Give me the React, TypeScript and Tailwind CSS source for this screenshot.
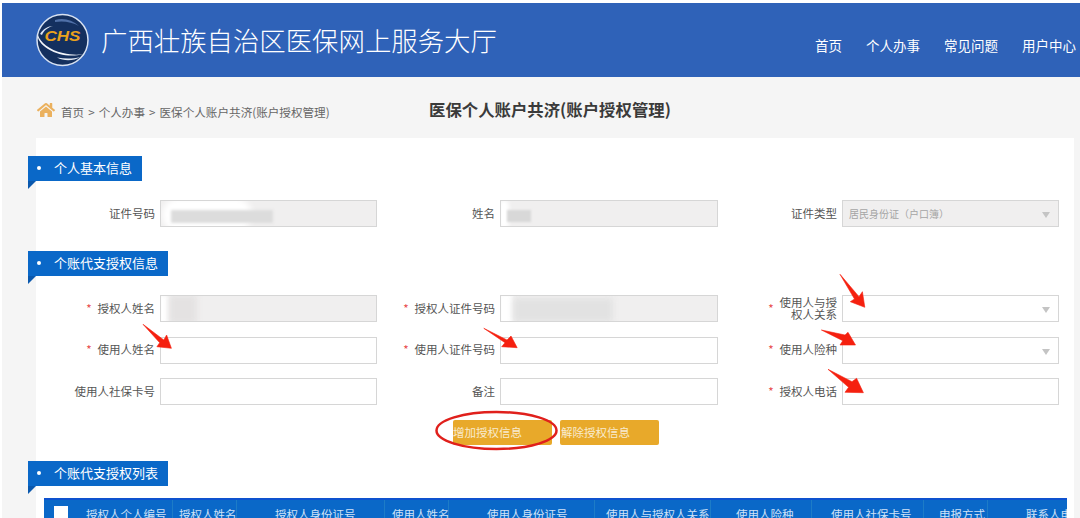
import { ReactNode } from 'react';
import { FaHome } from 'react-icons/fa';

function Logo() {
  return (
    <svg width="54" height="56" viewBox="0 0 54 56" className="shrink-0">
      <circle cx="27.5" cy="28" r="25.5" fill="#14305f" stroke="#d8e2f2" strokeWidth="1.5" />
      <path d="M3 23 C5 30 14 38 28 41 C35 42.5 42 43.5 48 42 C38 45 24 44 13 37 C6 32.5 2 27 3 23 Z" fill="#f2f5fa" />
      <path d="M22 45.5 C30 47 38 47 45 45 C39 49 29 49.5 22 45.5 Z" fill="#e3eaf4" />
      <path d="M5 22 C8 17 13 14 18 14 C13 15.5 9 18 7 23 Z" fill="#dfe7f3" />
      <path d="M20 8 C28 5.5 37 7.5 44 14 C37 10 28 8.5 20 10 Z" fill="#4f70a8" />
      <text x="27.5" y="28.5" textAnchor="middle" textLength="36" lengthAdjust="spacingAndGlyphs" fill="#eba21c" fontSize="14" fontWeight="700" fontStyle="italic" fontFamily="Liberation Sans, sans-serif">CHS</text>
    </svg>
  );
}

function SectionTab({ title, width, className }: { title: string; width: string; className: string }) {
  return (
    <div className={`relative -ml-2 flex h-[25px] items-center bg-[#0a68c8] pb-[1px] text-[13px] text-white ${width} ${className}`}>
      <span className="ml-[9px] mr-[13px] h-[4px] w-[4px] rounded-full bg-white" />
      {title}
      <span className="absolute left-0 top-[25px] h-0 w-0 border-r-[8px] border-t-[8px] border-r-transparent border-t-[#0a58ad]" />
    </div>
  );
}

function Field({ label, required, disabled, select, wide, children }: { label: ReactNode; required?: boolean; disabled?: boolean; select?: boolean; wide?: boolean; children?: ReactNode }) {
  return (
    <div className="flex h-[27px] items-center justify-end">
      <div className="mr-[5px] flex flex-1 items-center justify-end pb-[2px] text-right text-[11.5px] leading-[12px] text-[#555]">
        {required && <span className="mr-[6px] text-[#e8484a]">*</span>}
        <span>{label}</span>
      </div>
      <div className={`relative h-[27px] overflow-hidden border border-[#d6d6d6] ${wide ? 'w-[218px]' : 'w-[217px]'} ${disabled ? 'bg-[#f0efef]' : 'bg-white'}`}>
        {children}
        {select && (
          <span className="absolute right-[8px] top-[11px] h-0 w-0 border-x-[4px] border-t-[6px] border-x-transparent border-t-[#c4c4c4]" />
        )}
      </div>
    </div>
  );
}

const columns = [
  { title: '授权人个人编号', w: 'w-[129px]', pad: 'pl-[42px]' },
  { title: '授权人姓名', w: 'w-[64px]', pad: 'pl-[6px]' },
  { title: '授权人身份证号', w: 'w-[148px]', pad: 'pl-[38px]' },
  { title: '使用人姓名', w: 'w-[64px]', pad: 'pl-[7px]' },
  { title: '使用人身份证号', w: 'w-[146px]', pad: 'pl-[38px]' },
  { title: '使用人与授权人关系', w: 'w-[116px]', pad: 'pl-[11px]' },
  { title: '使用人险种', w: 'w-[101px]', pad: 'pl-[25px]' },
  { title: '使用人社保卡号', w: 'w-[112px]', pad: 'pl-[19px]' },
  { title: '申报方式', w: 'w-[64px]', pad: 'pl-[15px]' },
  { title: '联系人电话', w: 'w-[79px]', pad: 'pl-[38px]' },
];

export default function App() {
  return (
    <div className="relative h-[518px] w-[1080px] overflow-hidden bg-white pl-[2px] pt-[3px] [font-family:'Noto_Sans_CJK_SC','Liberation_Sans',sans-serif]">
      <header className="flex h-[74px] items-center bg-[#2f62b8] pl-[33px] pr-[4px] text-white">
        <Logo />
        <h1 className="ml-[12px] text-[26.4px] font-light leading-none">广西壮族自治区医保网上服务大厅</h1>
        <nav className="ml-auto mt-[10px] flex gap-[24px] text-[13.5px]">
          <span>首页</span>
          <span>个人办事</span>
          <span>常见问题</span>
          <span>用户中心</span>
        </nav>
      </header>

      <div className="h-[441px] bg-[#f5f5f5] pl-[34px] pr-[6px]">
        <div className="flex h-[61px] items-center pt-[4px]">
          <FaHome className="ml-[1px] text-[18px] text-[#ebb15e]" />
          <span className="ml-[6px] mt-[7px] w-[270px] whitespace-nowrap text-[11.6px] text-[#666]">
            首页<span className="mx-[4px]">&gt;</span>个人办事<span className="mx-[4px]">&gt;</span>医保个人账户共济(账户授权管理)
          </span>
          <h2 className="ml-[98px] text-[16.4px] font-bold text-[#3a3a3a]">医保个人账户共济(账户授权管理)</h2>
        </div>

        <main className="h-[380px] bg-white pt-[18px]">
          <SectionTab title="个人基本信息" width="w-[114px]" className="mb-[19px]" />
          <div className="grid w-[1023px] grid-cols-3">
            <Field label="证件号码" disabled>
              <div className="absolute left-[1px] top-[-3px] h-[34px] w-[90px] rounded-full bg-white blur-[3px]" />
              <div className="absolute left-[10px] top-[9px] h-[13px] w-[102px] bg-[#dcdcdc] blur-[1.5px]" />
            </Field>
            <Field label="姓名" disabled wide>
              <div className="absolute left-[-2px] top-[-1px] h-[29px] w-[10px] rounded-full bg-white blur-[2px]" />
              <div className="absolute left-[6px] top-[9px] h-[12px] w-[24px] bg-[#d8d8d8] blur-[1px]" />
            </Field>
            <Field label="证件类型" disabled select>
              <span className="absolute left-[6px] top-[5px] text-[10px] text-[#a5a5a5]">居民身份证（户口簿）</span>
            </Field>
          </div>

          <SectionTab title="个账代支授权信息" width="w-[140px]" className="mb-[19px] mt-[24px]" />
          <div className="grid w-[1023px] grid-cols-3 gap-y-[14.5px]">
            <Field label="授权人姓名" required disabled>
              <div className="absolute left-[-2px] top-[-1px] h-[29px] w-[10px] bg-white blur-[2px]" />
              <div className="absolute left-[8px] top-[-1px] h-[29px] w-[28px] bg-[#e4e2e2] blur-[3px]" />
            </Field>
            <Field label="授权人证件号码" required disabled wide>
              <div className="absolute left-[-2px] top-[-2px] h-[31px] w-[14px] bg-white blur-[2px]" />
              <div className="absolute left-[12px] top-[2px] h-[24px] w-[100px] bg-[#e2e2e2] blur-[3px]" />
            </Field>
            <Field label={<>使用人与授<br />权人关系</>} required select />
            <Field label="使用人姓名" required />
            <Field label="使用人证件号码" required wide />
            <Field label="使用人险种" required select />
            <Field label="使用人社保卡号" />
            <Field label="备注" wide />
            <Field label="授权人电话" required />
          </div>

          <div className="ml-[417px] mt-[15px] flex gap-[8px] text-[11.5px] text-[#f8ebcf]">
            <button className="flex h-[24.5px] w-[99px] items-center rounded-[2px] bg-[#e8a92a]">增加授权信息</button>
            <button className="flex h-[24.5px] w-[99px] items-center rounded-[2px] bg-[#e8a92a] pl-[1px]">解除授权信息</button>
          </div>

          <SectionTab title="个账代支授权列表" width="w-[140px]" className="mt-[16px]" />
          <div className="relative ml-[8px] mt-[12px] flex h-[30px] w-[1023px] overflow-hidden border-t-2 border-[#0e52cf] bg-[#0a68c8] text-[11.5px] text-[#cfe2f7]">
            <span className="absolute left-[10px] top-[6px] h-[16px] w-[14px] bg-white" />
            {columns.map((c) => (
              <div key={c.title} className={`h-full shrink-0 whitespace-nowrap border-r border-[#1d7cc7] pt-[6px] last:border-r-0 ${c.w} ${c.pad}`}>
                {c.title}
              </div>
            ))}
          </div>
        </main>
      </div>

      {/* red annotations drawn over the screenshot */}
      <svg className="pointer-events-none absolute left-0 top-0" width="1080" height="518" viewBox="0 0 1080 518">
        <g fill="#f5200f" stroke="#f5200f" strokeWidth="0.6" strokeLinejoin="round">
          <polygon points="840,274.3 859,296.7 862.4,291.7 864.8,307.3 850.3,301.7 854.5,299" />
          <polygon points="821.4,330 845,335 848,332.3 855.5,345 840,345 842.8,340.7" />
          <polygon points="828,369.3 852,381.7 856.6,378.3 863.4,392.7 845,392.3 848.6,387.3" />
          <polygon points="143,324.3 163.8,340 166.6,335 171.4,348.3 156.9,346.7 159.7,342.7" />
          <polygon points="483.8,328.3 507,340 511,336 517.2,347.7 501.7,346.7 505,342.7" />
        </g>
        <ellipse cx="496.5" cy="430.5" rx="60" ry="18.5" fill="none" stroke="#e0201c" strokeWidth="2.5" />
      </svg>
    </div>
  );
}
